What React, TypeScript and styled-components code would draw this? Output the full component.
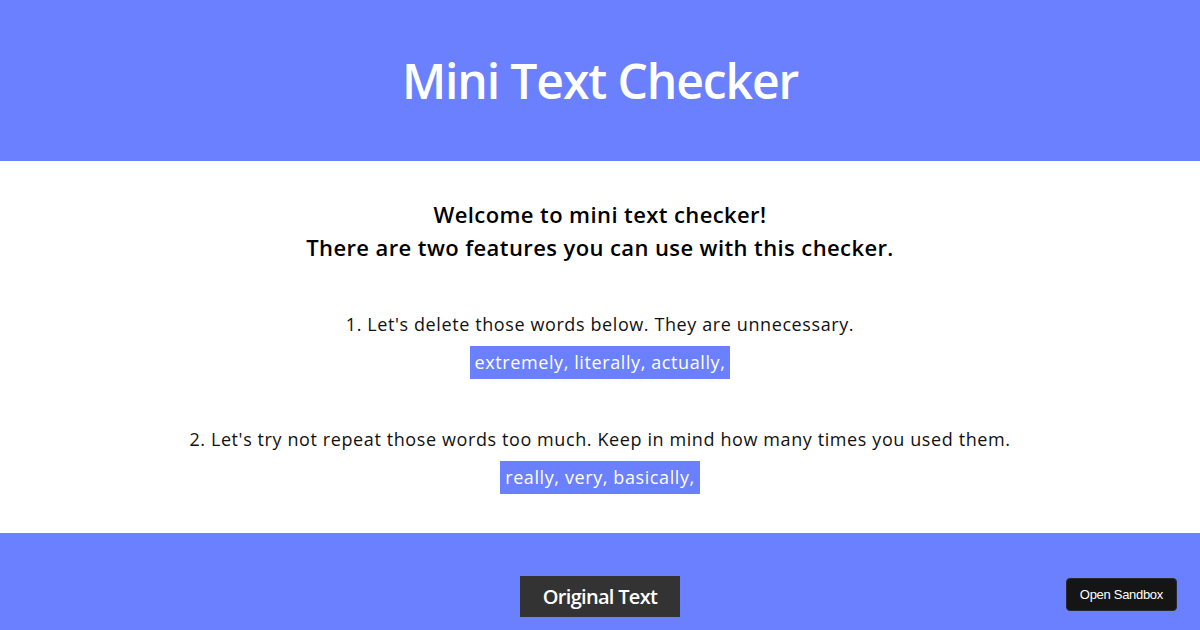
import styled, { createGlobalStyle } from 'styled-components';

const GlobalStyle = createGlobalStyle`
  body {
    margin: 0;
    font-family: "Open Sans", "Noto Sans", sans-serif;
    background: #ffffff;
  }
`;

const Page = styled.div`
  display: flex;
  flex-direction: column;
  min-height: 630px;
`;

const Header = styled.header`
  height: 161px;
  background: #6b80ff;
  display: flex;
  align-items: center;
  justify-content: center;
`;

const Title = styled.h1`
  margin: 0;
  color: #ffffff;
  font-size: 48px;
  font-weight: 600;
  letter-spacing: -1.1px;
`;

const Main = styled.main`
  padding: 37px 0 39px;
  display: flex;
  flex-direction: column;
  align-items: center;
  text-align: center;
`;

const Intro = styled.h2`
  margin: 0 0 47px;
  font-size: 22px;
  font-weight: 600;
  letter-spacing: 0.4px;
  line-height: 33px;
  color: #000;
`;

const Feature = styled.section`
  display: flex;
  flex-direction: column;
  align-items: center;
  gap: 8px;
  & + & {
    margin-top: 47px;
  }
`;

const Description = styled.p`
  margin: 0;
  font-size: 18px;
  letter-spacing: 0.6px;
  line-height: 27px;
  color: #111;
`;

const Words = styled.span`
  display: inline-block;
  background: #6b80ff;
  color: #ffffff;
  font-size: 18px;
  letter-spacing: 0.6px;
  line-height: 33px;
  padding: 0 5px;
`;

const Footer = styled.footer`
  flex: 1;
  background: #6b80ff;
  display: flex;
  justify-content: center;
  padding-top: 43px;
  position: relative;
`;

const OriginalButton = styled.button`
  height: 41px;
  width: 160px;
  background: #333333;
  color: #ffffff;
  border: none;
  font-family: "Open Sans", sans-serif;
  font-size: 20px;
  font-weight: 600;
  letter-spacing: -0.7px;
  cursor: pointer;
`;

const SandboxButton = styled.button`
  position: absolute;
  right: 23px;
  bottom: 19px;
  height: 33px;
  padding: 0 13px;
  background: #151515;
  color: #ffffff;
  border: 1px solid #2a2a2a;
  border-radius: 4px;
  font-family: "Liberation Sans", Arial, sans-serif;
  font-size: 13px;
  letter-spacing: -0.3px;
  cursor: pointer;
`;

const features = [
  {
    text: "1. Let's delete those words below. They are unnecessary.",
    words: 'extremely, literally, actually,',
  },
  {
    text: "2. Let's try not repeat those words too much. Keep in mind how many times you used them.",
    words: 'really, very, basically,',
  },
];

export default function App() {
  return (
    <>
      <GlobalStyle />
      <Page>
        <Header>
          <Title>Mini Text Checker</Title>
        </Header>
        <Main>
          <Intro>
            Welcome to mini text checker!
            <br />
            There are two features you can use with this checker.
          </Intro>
          {features.map(f => (
            <Feature key={f.words}>
              <Description>{f.text}</Description>
              <Words>{f.words}</Words>
            </Feature>
          ))}
        </Main>
        <Footer>
          <OriginalButton>Original Text</OriginalButton>
          <SandboxButton>Open Sandbox</SandboxButton>
        </Footer>
      </Page>
    </>
  );
}
